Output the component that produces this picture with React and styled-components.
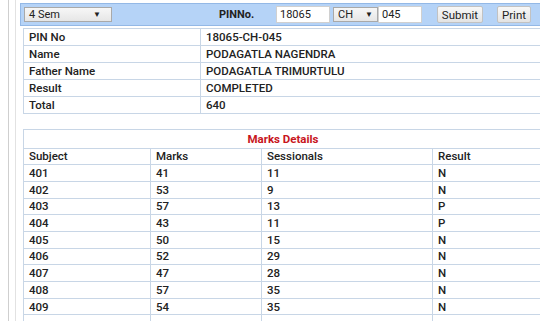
import React from "react";
import styled, { createGlobalStyle } from "styled-components";

const Global = createGlobalStyle`
  html, body { margin: 0; padding: 0; background: #fff; overflow: hidden; }
  body { font-family: Roboto, "Noto Sans", Arial, sans-serif; color: #222; }
`;

const Outer = styled.div`
  margin-left: 8px;
  border-left: 1px solid #cfcfcf;
  padding-left: 6px;
  min-height: 100vh;
  width: 560px;
`;

const Inner = styled.div`
  border-left: 1px solid #e2e2e2;
  padding-left: 4px;
  padding-top: 3px;
  min-height: 100vh;
`;

const TopBar = styled.div`
  display: flex;
  align-items: center;
  height: 21px;
  background: #b5d3f7;
  border: 1px solid #93b8e6;
  padding-left: 3px;
  width: 540px;
`;

const FakeSelect = styled.div`
  display: flex;
  align-items: center;
  justify-content: space-between;
  box-sizing: border-box;
  width: ${(p) => p.$w}px;
  height: 15px;
  padding: 0 4px 0 4px;
  font-size: 11px;
  background: linear-gradient(#f7f7f7, #e6e6e6);
  border: 1px solid #a9a9a9;
  margin-left: ${(p) => p.$ml || 0}px;
`;

const Arrow = styled.span`
  font-size: 8px;
  margin-right: ${(p) => p.$mr}px;
`;

const PinLabel = styled.div`
  width: 57px;
  margin-left: 107px;
  font-size: 11px;
  font-weight: 700;
`;

const Field = styled.div`
  box-sizing: border-box;
  width: ${(p) => p.$w}px;
  height: 17px;
  background: #fff;
  border: 1px solid #d0d0d0;
  font-size: 11px;
  line-height: 15px;
  padding-left: 3px;
  margin-left: ${(p) => p.$ml || 0}px;
`;

const Button = styled.button`
  box-sizing: border-box;
  width: ${(p) => p.$w}px;
  height: 17px;
  margin-left: ${(p) => p.$ml}px;
  padding: 0;
  font-family: Roboto, Arial, sans-serif;
  font-size: 11.5px;
  color: #222;
  background: linear-gradient(#f8f8f8, #e3e3e3);
  border: 1px solid #c2c2c2;
  border-radius: 2px;
`;

const Table = styled.table`
  margin-top: ${(p) => p.$mt}px;
  margin-left: 3px;
  width: 520px;
  table-layout: fixed;
  border-collapse: collapse;
  border: 1.5px solid #c6d5e6;
  font-size: 11.5px;
  font-weight: 500;
`;

const Td = styled.td`
  border: 1.5px solid #c8d6e6;
  height: ${(p) => p.$h || 15.7}px;
  padding: 0 5px;
  line-height: 14px;
  white-space: nowrap;
  overflow: hidden;
`;

const Caption = styled.td`
  border: 1.5px solid #c8d6e6;
  height: 17.5px;
  padding: 0;
  text-align: center;
  color: #c8161d;
  font-weight: 700;
`;

const info = [
  ["PIN No", "18065-CH-045"],
  ["Name", "PODAGATLA NAGENDRA"],
  ["Father Name", "PODAGATLA TRIMURTULU"],
  ["Result", "COMPLETED"],
  ["Total", "640"],
];

const marks = [
  ["401", "41", "11", "N"],
  ["402", "53", "9", "N"],
  ["403", "57", "13", "P"],
  ["404", "43", "11", "P"],
  ["405", "50", "15", "N"],
  ["406", "52", "29", "N"],
  ["407", "47", "28", "N"],
  ["408", "57", "35", "N"],
  ["409", "54", "35", "N"],
  ["", "", "", ""],
];

export default function App() {
  return (
    <>
      <Global />
      <Outer>
        <Inner>
          <TopBar>
            <FakeSelect $w={88}>
              <span>4 Sem</span>
              <Arrow $mr={6}>▼</Arrow>
            </FakeSelect>
            <PinLabel>PINNo.</PinLabel>
            <Field $w={54}>18065</Field>
            <FakeSelect $w={45} $ml={3}>
              <span>CH</span>
              <Arrow $mr={0}>▼</Arrow>
            </FakeSelect>
            <Field $w={44}>045</Field>
            <Button $w={46} $ml={15}>Submit</Button>
            <Button $w={34} $ml={14}>Print</Button>
          </TopBar>
          <Table $mt={2}>
            <colgroup>
              <col style={{ width: 177 }} />
              <col />
            </colgroup>
            <tbody>
              {info.map(([k, v]) => (
                <tr key={k}>
                  <Td $h={16}>{k}</Td>
                  <Td $h={16}>{v}</Td>
                </tr>
              ))}
            </tbody>
          </Table>
          <Table $mt={15}>
            <colgroup>
              <col style={{ width: 127 }} />
              <col style={{ width: 111 }} />
              <col style={{ width: 171 }} />
              <col />
            </colgroup>
            <tbody>
              <tr>
                <Caption colSpan={4}>Marks Details</Caption>
              </tr>
              <tr>
                <Td>Subject</Td>
                <Td>Marks</Td>
                <Td>Sessionals</Td>
                <Td>Result</Td>
              </tr>
              {marks.map((r, i) => (
                <tr key={i}>
                  {r.map((c, j) => (
                    <Td key={j}>{c}</Td>
                  ))}
                </tr>
              ))}
            </tbody>
          </Table>
        </Inner>
      </Outer>
    </>
  );
}
